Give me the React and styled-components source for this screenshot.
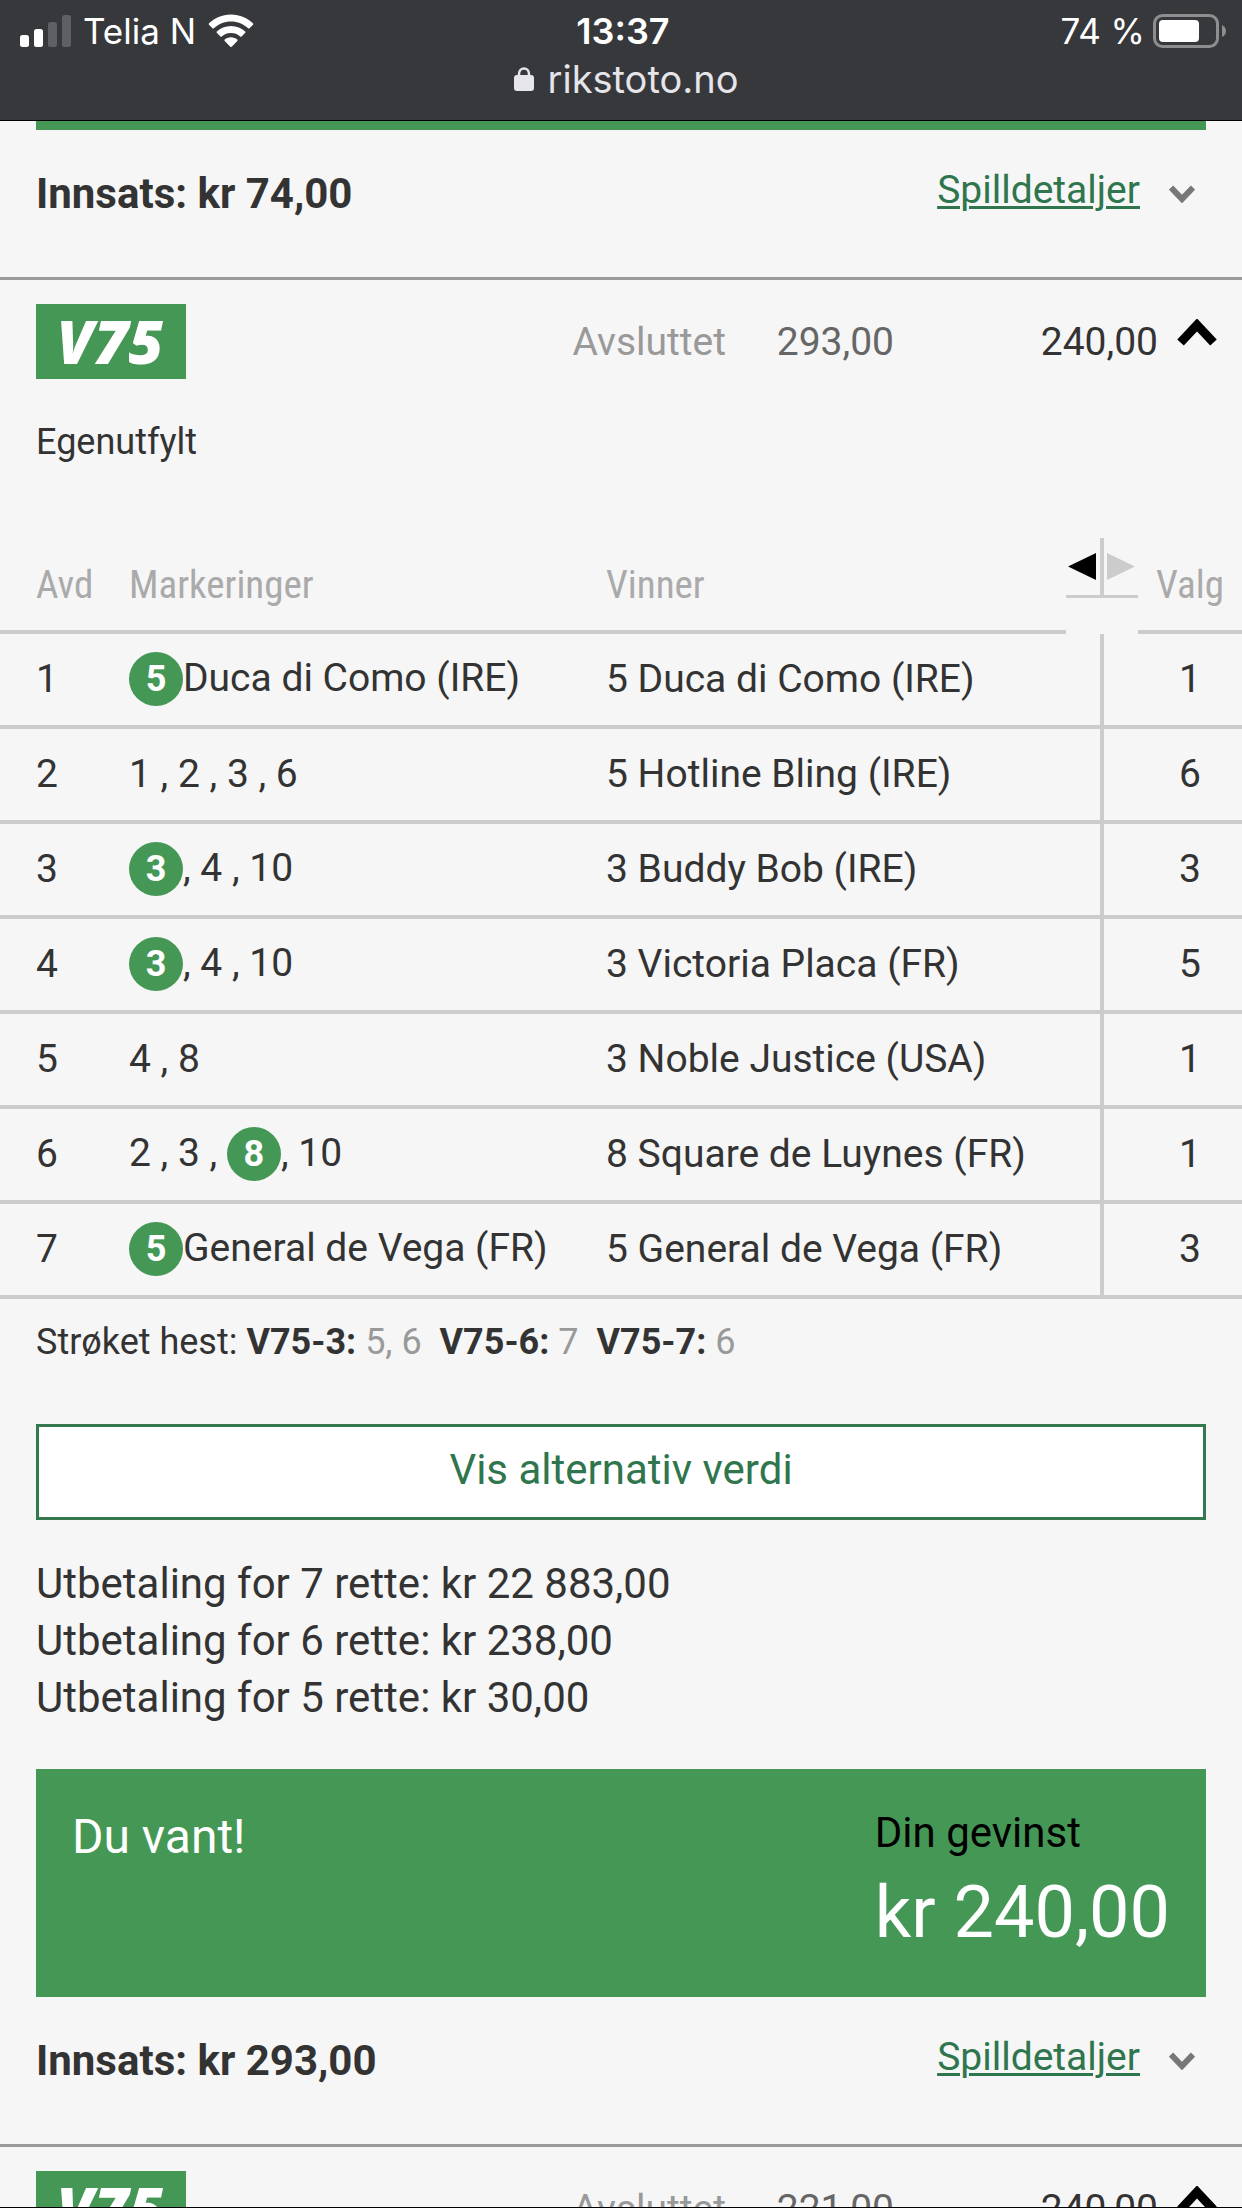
import { useState } from "react";
import styled, { createGlobalStyle } from "styled-components";

const GlobalStyle = createGlobalStyle`
  * {
    box-sizing: border-box;
  }
  body {
    margin: 0;
    background: #f6f6f6;
    color: #333;
    font-family: Roboto, "Liberation Sans", sans-serif;
    font-size: 39px;
  }
  button {
    font-family: inherit;
    cursor: pointer;
  }
`;

const Screen = styled.div`
  display: flex;
  flex-direction: column;
  height: 100vh;
  overflow: hidden;
  border-bottom: 1px solid #000;
`;

const StatusBar = styled.header`
  flex: none;
  padding: 8px 16px 10px 20px;
  background: #37383c;
  border-bottom: 1px solid #000;
  color: #fff;
  font-family: Inter, "Liberation Sans", sans-serif;
  font-size: 35px;
`;

const StatusRow = styled.div`
  display: grid;
  grid-template-columns: 1fr auto 1fr;
  align-items: center;
  height: 46px;
`;

const StatusGroup = styled.div`
  display: flex;
  align-items: center;
  gap: ${(props) => props.$gap}px;
  justify-content: ${(props) => (props.$end ? "flex-end" : "flex-start")};
`;

const Clock = styled.span`
  font-weight: 600;
  font-size: 36px;
`;

const AddressRow = styled.div`
  display: flex;
  align-items: center;
  justify-content: center;
  gap: 14px;
  height: 56px;
  padding: 0 0 6px 6px;
  color: #e5e5ea;
  font-size: 38px;
`;

const Content = styled.main`
  flex: 1;
  min-height: 0;
  overflow: hidden;
`;

const PreviousWin = styled.div`
  height: 9px;
  margin: 0 36px;
  background: #459756;
`;

const BetFooter = styled.footer`
  display: flex;
  align-items: center;
  padding: 35px 47px 55px 36px;
  border-bottom: 3px solid #999;
`;

const Stake = styled.strong`
  margin-right: auto;
  font-size: 42px;
  line-height: 57px;
`;

const DetailsLink = styled.a`
  margin-right: 29px;
  padding-bottom: 6px;
  color: #2f754d;
  line-height: 49px;
  text-decoration-thickness: 3px;
  text-underline-offset: 3px;
`;

const BetHeader = styled.header`
  display: flex;
  align-items: center;
  padding: 24px 25px 0 36px;
`;

const GameLogo = styled.h2`
  display: flex;
  align-items: center;
  justify-content: center;
  width: 150px;
  height: 75px;
  margin: 0 auto 0 0;
  padding-right: 2px;
  background: #459756;
  color: #fff;
  font-family: "Open Sans", sans-serif;
  font-size: 60px;
  font-style: italic;
  font-weight: 800;
  line-height: 73px;
`;

const Status = styled.span`
  color: #999;
`;

const Amount = styled.span`
  width: ${(props) => props.$width}px;
  color: ${(props) => props.$color};
  text-align: right;
`;

const ToggleButton = styled.button`
  display: flex;
  align-self: flex-start;
  margin-left: 19px;
  padding: 15px 0 0;
  border: 0;
  background: none;
`;

const Origin = styled.p`
  margin: 36px 36px 69px;
  font-size: 36px;
  line-height: 54px;
`;

const Legs = styled.table`
  width: 100%;
  table-layout: fixed;
  border-spacing: 0;
`;

const Column = styled.col`
  width: ${(props) => props.$width};
`;

const HeadCell = styled.th`
  height: 96px;
  padding: 0 0 22px ${(props) => props.$indent || 0}px;
  border-bottom: 4px solid #ccc;
  color: #aaa;
  font-family: "Roboto Condensed", Roboto, sans-serif;
  font-size: 39px;
  font-weight: 400;
  line-height: 45px;
  text-align: ${(props) => (props.$center ? "center" : "left")};
  vertical-align: bottom;
`;

const ResizeCell = styled.th`
  height: 96px;
  padding: 0;
  vertical-align: top;
`;

const ResizeButton = styled.button`
  display: flex;
  padding: 0;
  border: 0;
  background: none;
`;

const Cell = styled.td`
  height: 95px;
  padding: 0 0 2px ${(props) => props.$indent || 0}px;
  border-bottom: 4px solid #ccc;
  line-height: 54px;
  white-space: nowrap;
  text-align: ${(props) => (props.$center ? "center" : "left")};
`;

const DividerCell = styled(Cell)`
  background: linear-gradient(#ccc, #ccc) center / 4px 100% no-repeat;
`;

const Hit = styled.b`
  display: inline-block;
  width: 54px;
  height: 54px;
  border-radius: 50%;
  background: #459756;
  color: #fff;
  font-size: 36px;
  text-align: center;
`;

const Scratched = styled.p`
  margin: 16px 36px 55px;
  font-size: 36px;
  line-height: 54px;
`;

const Horses = styled.span`
  margin-right: 9px;
  color: #999;
`;

const AltButton = styled.button`
  display: block;
  width: calc(100% - 72px);
  height: 96px;
  margin: 0 36px;
  padding: 0 0 6px;
  border: 3px solid #33784f;
  background: #fff;
  color: #2f754d;
  font-size: 42px;
`;

const Payouts = styled.ul`
  margin: 35px 36px 43px;
  padding: 0;
  list-style: none;
  font-size: 42px;
  line-height: 57px;
`;

const WinBox = styled.section`
  display: flex;
  justify-content: space-between;
  margin: 0 36px;
  padding: 36px 36px 32px;
  background: #459756;
  color: #fff;
`;

const WinTitle = styled.h3`
  margin: 0;
  font-size: 48px;
  font-weight: 400;
  line-height: 64px;
`;

const WinLabel = styled.div`
  color: #000;
  font-size: 42px;
  line-height: 56px;
`;

const WinAmount = styled.div`
  font-size: 72px;
  line-height: 104px;
`;

const SignalIcon = () => (
  <svg width="51" height="32" viewBox="0 0 51 32" fill="#fff">
    <rect x="0" y="20" width="9" height="12" rx="2.5" />
    <rect x="14" y="14" width="9" height="18" rx="2.5" />
    <rect x="28" y="7" width="9" height="25" rx="2.5" fill="#5f6063" />
    <rect x="42" y="0" width="9" height="32" rx="2.5" fill="#5f6063" />
  </svg>
);

const WifiIcon = () => (
  <svg width="46" height="34" viewBox="0 0 46 34" fill="#fff">
    <path d="M23 0.5C32 0.5 39.5 4 45 9.3Q45.6 10 45 10.7L41.5 14.2Q40.8 14.8 40.1 14.2C35.5 10 29.7 7.5 23 7.5S10.5 10 5.9 14.2Q5.2 14.8 4.5 14.2L1 10.7Q0.4 10 1 9.3C6.5 4 14 0.5 23 0.5Z" />
    <path d="M23 12C28.8 12 33.5 14.1 37.2 17.4Q37.9 18.1 37.2 18.8L33.6 22.4Q32.9 23 32.2 22.4C29.6 20.2 26.6 19 23 19S16.4 20.2 13.8 22.4Q13.1 23 12.4 22.4L8.8 18.8Q8.1 18.1 8.8 17.4C12.5 14.1 17.2 12 23 12Z" />
    <path d="M23 23.3C25.5 23.3 27.6 24.2 29.3 25.6Q30 26.2 29.3 26.9L23.7 32.7Q23 33.4 22.3 32.7L16.7 26.9Q16 26.2 16.7 25.6C18.4 24.2 20.5 23.3 23 23.3Z" />
  </svg>
);

const BatteryIcon = () => (
  <svg width="73" height="34" viewBox="0 0 73 34">
    <rect x="1.5" y="1.5" width="63" height="31" rx="8" fill="none" stroke="#8d8e90" strokeWidth="3" />
    <rect x="6" y="6" width="40" height="22" rx="4" fill="#fff" />
    <path d="M69 11Q73 13 73 17T69 23Z" fill="#8d8e90" />
  </svg>
);

const LockIcon = () => (
  <svg width="20" height="24" viewBox="0 0 20 24">
    <path d="M5 11V7C5 -0.5 15 -0.5 15 7V11" fill="none" stroke="#e5e5ea" strokeWidth="2.5" />
    <rect y="8" width="20" height="16" rx="3" fill="#e5e5ea" />
  </svg>
);

const ChevronDown = () => (
  <svg width="26" height="18" viewBox="0 0 26 18">
    <path d="M2 2.5L13 14L24 2.5" fill="none" stroke="#777" strokeWidth="6" />
  </svg>
);

const ChevronUp = () => (
  <svg width="40" height="27" viewBox="0 0 40 27">
    <path d="M3.5 23.5L20 6L36.5 23.5" fill="none" stroke="#000" strokeWidth="9" />
  </svg>
);

const ResizeIcon = () => (
  <svg width="72" height="60" viewBox="0 0 72 60">
    <path d="M34 0H38V57H72V60H0V57H34Z" fill="#ccc" />
    <path d="M30 15V42L2 28.5Z" fill="#000" />
    <path d="M41 15V42L69 28.5Z" fill="#ccc" />
  </svg>
);

const legs = [
  { marks: [5], name: "Duca di Como (IRE)", hit: 5, winner: "5 Duca di Como (IRE)", choice: 1 },
  { marks: [1, 2, 3, 6], winner: "5 Hotline Bling (IRE)", choice: 6 },
  { marks: [3, 4, 10], hit: 3, winner: "3 Buddy Bob (IRE)", choice: 3 },
  { marks: [3, 4, 10], hit: 3, winner: "3 Victoria Placa (FR)", choice: 5 },
  { marks: [4, 8], winner: "3 Noble Justice (USA)", choice: 1 },
  { marks: [2, 3, 8, 10], hit: 8, winner: "8 Square de Luynes (FR)", choice: 1 },
  { marks: [5], name: "General de Vega (FR)", hit: 5, winner: "5 General de Vega (FR)", choice: 3 },
];

const scratched = [
  { leg: "V75-3:", horses: "5, 6" },
  { leg: "V75-6:", horses: "7" },
  { leg: "V75-7:", horses: "6" },
];

const payouts = [
  "Utbetaling for 7 rette: kr 22 883,00",
  "Utbetaling for 6 rette: kr 238,00",
  "Utbetaling for 5 rette: kr 30,00",
];

const Marks = ({ leg }) => (
  <>
    {leg.marks.map((mark, i) => {
      const last = i === leg.marks.length - 1;
      // a hit sits tight against the comma that follows it
      if (mark === leg.hit) {
        return (
          <span key={mark}>
            <Hit>{mark}</Hit>
            {!last && ", "}
          </span>
        );
      }
      return <span key={mark}>{last ? mark : `${mark} , `}</span>;
    })}
    {leg.name}
  </>
);

const Header = ({ stake, payout, open, onToggle }) => (
  <BetHeader>
    <GameLogo>V75</GameLogo>
    <Status>Avsluttet</Status>
    <Amount $width={168} $color="#666">{stake}</Amount>
    <Amount $width={264} $color="#333">{payout}</Amount>
    <ToggleButton aria-label="Vis spill" aria-expanded={open} onClick={onToggle}>
      <ChevronUp />
    </ToggleButton>
  </BetHeader>
);

const Footer = ({ stake }) => (
  <BetFooter>
    <Stake>Innsats: kr {stake}</Stake>
    <DetailsLink href="#spilldetaljer">Spilldetaljer</DetailsLink>
    <ChevronDown />
  </BetFooter>
);

const App = () => {
  const [open, setOpen] = useState(true);

  return (
    <Screen>
      <GlobalStyle />
      <StatusBar>
        <StatusRow>
          <StatusGroup $gap={12}>
            <SignalIcon />
            <span>Telia N</span>
            <WifiIcon />
          </StatusGroup>
          <Clock>13:37</Clock>
          <StatusGroup $gap={8} $end>
            <span>74 %</span>
            <BatteryIcon />
          </StatusGroup>
        </StatusRow>
        <AddressRow>
          <LockIcon />
          <span>rikstoto.no</span>
        </AddressRow>
      </StatusBar>
      <Content>
        <PreviousWin />
        <Footer stake="74,00" />
        <Header stake="293,00" payout="240,00" open={open} onToggle={() => setOpen(!open)} />
        {open && (
          <>
            <Origin>Egenutfylt</Origin>
            <Legs>
              <colgroup>
                <Column $width="129px" />
                <Column $width="477px" />
                <Column />
                <Column $width="72px" />
                <Column $width="104px" />
              </colgroup>
              <thead>
                <tr>
                  <HeadCell $indent={36}>Avd</HeadCell>
                  <HeadCell>Markeringer</HeadCell>
                  <HeadCell>Vinner</HeadCell>
                  <ResizeCell>
                    <ResizeButton aria-label="Endre kolonnebredde">
                      <ResizeIcon />
                    </ResizeButton>
                  </ResizeCell>
                  <HeadCell $center>Valg</HeadCell>
                </tr>
              </thead>
              <tbody>
                {legs.map((leg, i) => (
                  <tr key={i}>
                    <Cell $indent={36}>{i + 1}</Cell>
                    <Cell>
                      <Marks leg={leg} />
                    </Cell>
                    <Cell>{leg.winner}</Cell>
                    <DividerCell />
                    <Cell $center>{leg.choice}</Cell>
                  </tr>
                ))}
              </tbody>
            </Legs>
            <Scratched>
              Strøket hest:{" "}
              {scratched.map((item) => (
                <span key={item.leg}>
                  <b>{item.leg}</b> <Horses>{item.horses}</Horses>{" "}
                </span>
              ))}
            </Scratched>
            <AltButton>Vis alternativ verdi</AltButton>
            <Payouts>
              {payouts.map((line) => (
                <li key={line}>{line}</li>
              ))}
            </Payouts>
            <WinBox>
              <WinTitle>Du vant!</WinTitle>
              <div>
                <WinLabel>Din gevinst</WinLabel>
                <WinAmount>kr 240,00</WinAmount>
              </div>
            </WinBox>
          </>
        )}
        <Footer stake="293,00" />
        <Header stake="221,00" payout="240,00" open />
      </Content>
    </Screen>
  );
};

export default App;
